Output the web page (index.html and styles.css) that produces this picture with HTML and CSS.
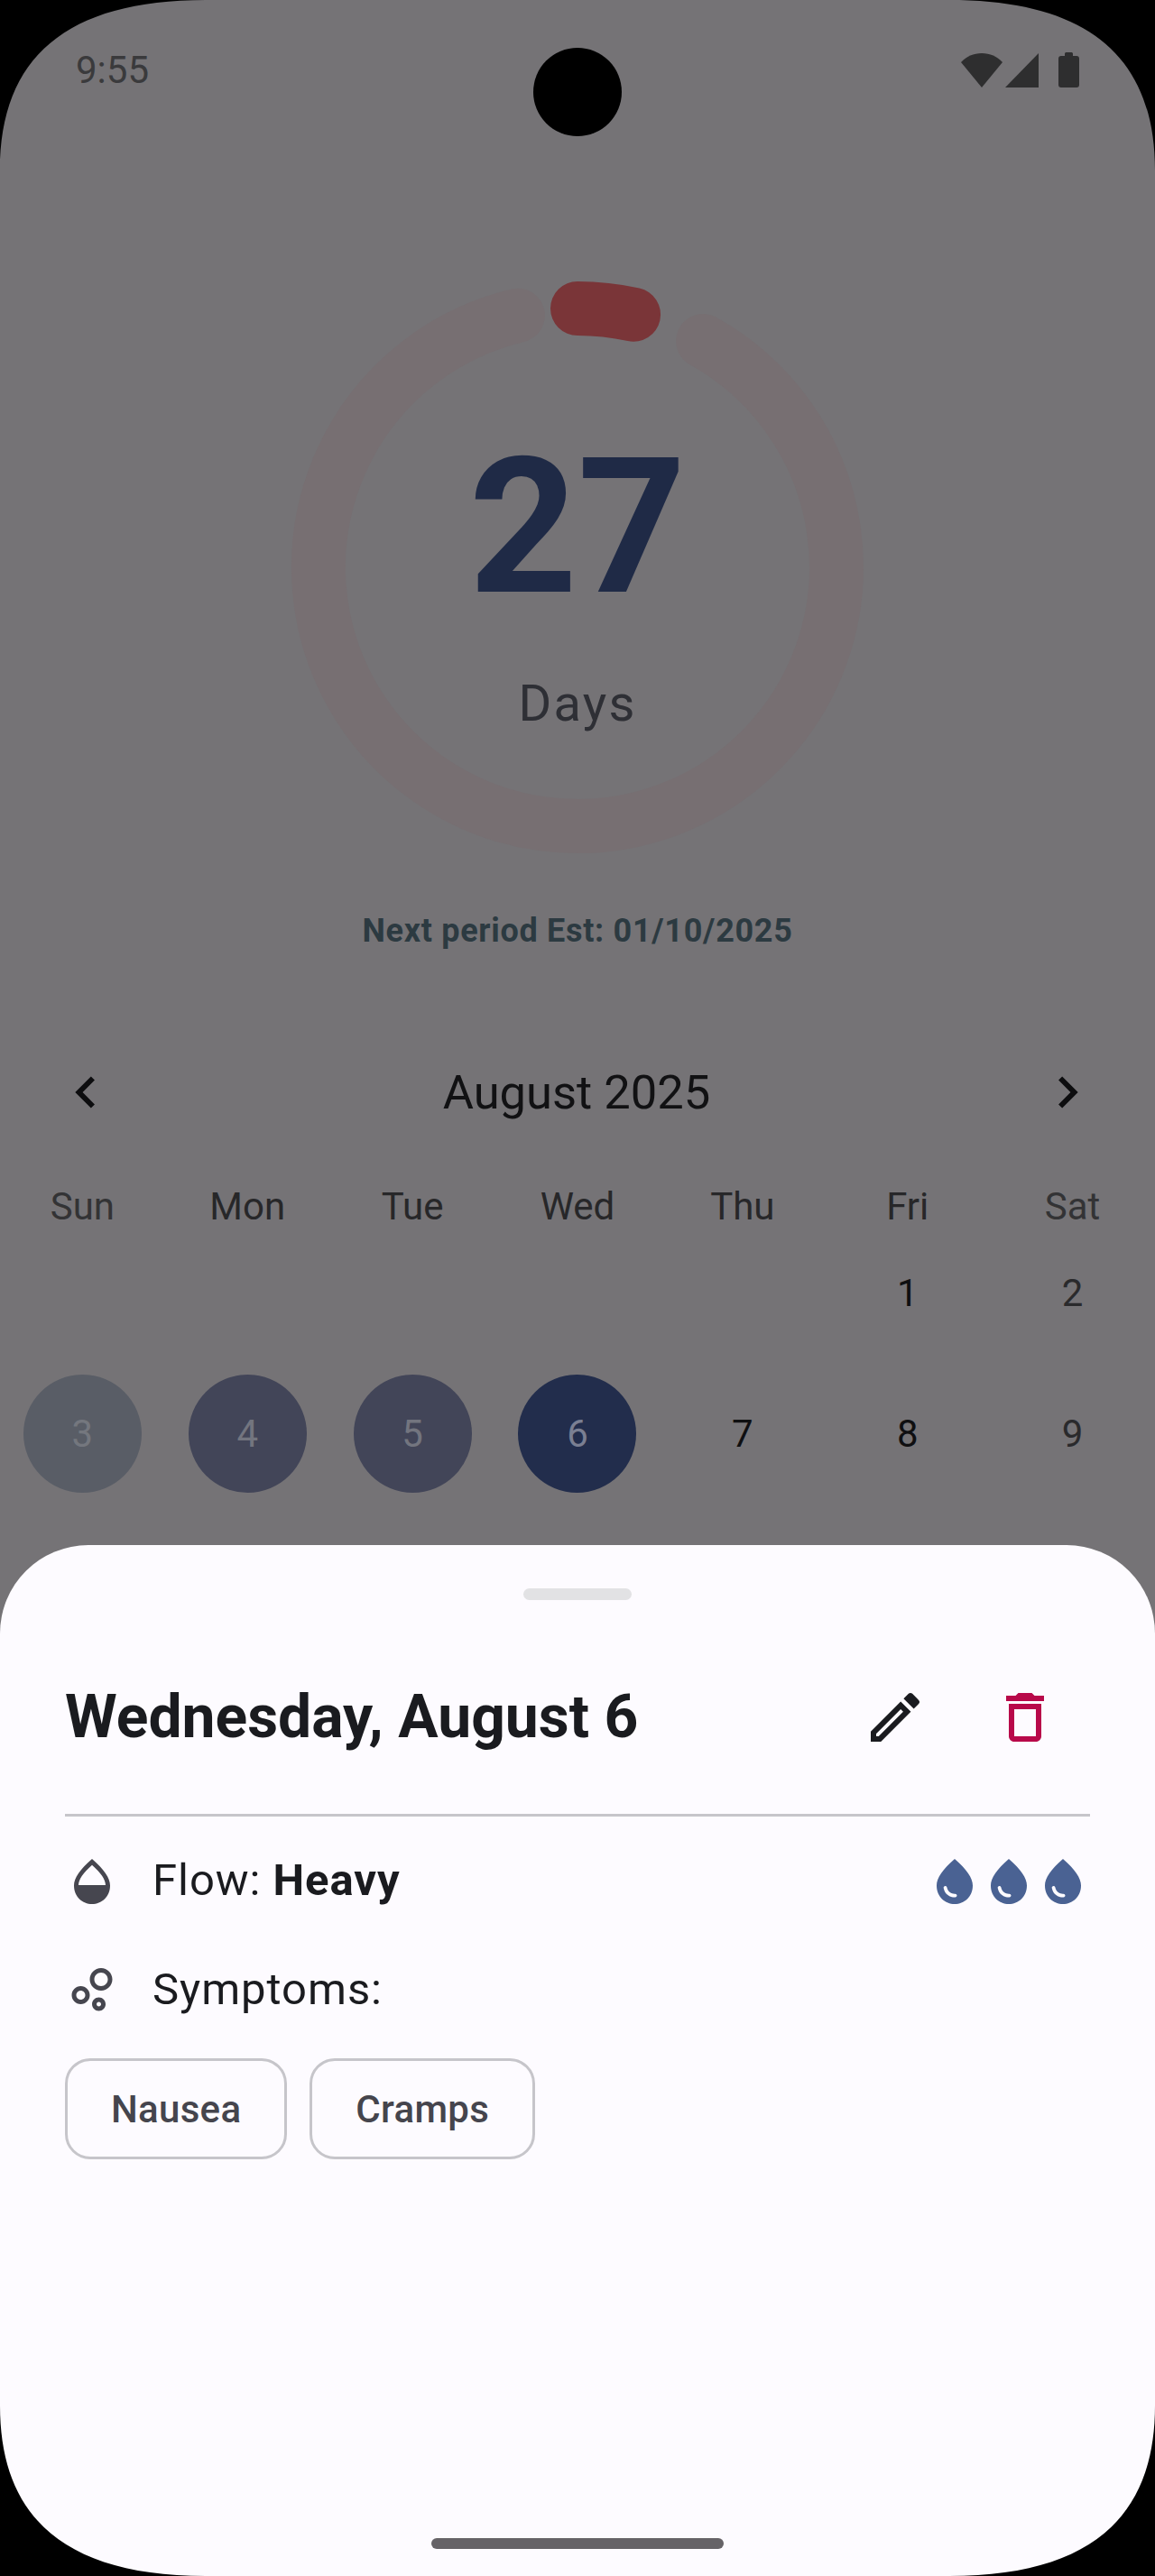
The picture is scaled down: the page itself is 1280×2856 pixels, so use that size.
FILE: index.html
```html
<!DOCTYPE html>
<html lang="en">
<head>
  <meta charset="UTF-8" />
  <title>Cycle Tracker</title>
  <link rel="stylesheet" href="styles.css">
</head>
<body>
<div class="screen">
  <div class="backdrop">
    <div class="status-bar">
      <span class="clock">9:55</span>
      <div class="status-icons">
        <svg width="46" height="38" viewBox="0 0 46 38"><path d="M0 10C6 3.500 14 0 23 0s17 3.500 23 10L23 38z"/></svg>
        <svg width="37" height="38" viewBox="0 0 37 38"><path d="M37 0v38H0z"/></svg>
        <svg width="23" height="39" viewBox="0 0 23 39"><path d="M7 4V1.500A1.500 1.500 0 0 1 8.500 0h6A1.500 1.500 0 0 1 16 1.500V4h4a3 3 0 0 1 3 3v29a3 3 0 0 1-3 3H3a3 3 0 0 1-3-3V7a3 3 0 0 1 3-3z"/></svg>
      </div>
    </div>

    <div class="ring">
      <svg class="ring-svg" width="640" height="640" viewBox="0 0 640 640">
        <path class="ring-track" d="M459.100 69A287 287 0 1 1 253.900 40.700"/>
        <path class="ring-value" d="M320 33A287 287 0 0 1 382.100 39.800"/>
      </svg>
      <div class="ring-label">
        <div class="ring-count">27</div>
        <div class="ring-unit">Days</div>
      </div>
    </div>

    <p class="next-period">Next period Est: 01/10/2025</p>

    <div class="month-bar">
      <svg class="chevron" viewBox="0 0 24 24"><path d="M15.410 7.410 14 6l-6 6 6 6 1.410-1.410L10.830 12z"/></svg>
      <span class="month-name">August 2025</span>
      <svg class="chevron" viewBox="0 0 24 24"><path d="M10 6 8.590 7.410 13.170 12l-4.580 4.590L10 18l6-6z"/></svg>
    </div>

    <div class="weekdays">
      <span class="dim">Sun</span><span>Mon</span><span>Tue</span><span>Wed</span><span>Thu</span><span>Fri</span><span class="dim">Sat</span>
    </div>

    <div class="days">
      <span></span><span></span><span></span><span></span><span></span>
      <span class="day">1</span>
      <span class="day weekend">2</span>
      <span class="day period p1"><b>3</b></span>
      <span class="day period p2"><b>4</b></span>
      <span class="day period p2"><b>5</b></span>
      <span class="day period p3"><b>6</b></span>
      <span class="day">7</span>
      <span class="day">8</span>
      <span class="day weekend">9</span>
    </div>
  </div>

  <div class="sheet">
    <div class="handle"></div>

    <div class="sheet-head">
      <h2 class="sheet-title">Wednesday, August 6</h2>
      <svg class="act edit" viewBox="0 0 24 24"><path d="M14.060 9.020l.92.92L5.920 19H5v-.92l9.060-9.060M17.660 3c-.25 0-.51.1-.7.29l-1.830 1.830 3.750 3.750 1.830-1.830c.39-.39.39-1.020 0-1.410l-2.340-2.340c-.2-.2-.45-.29-.71-.29zm-3.600 3.190L3 17.250V21h3.750L17.810 9.940l-3.750-3.750z"/></svg>
      <svg class="act del" viewBox="0 0 24 24"><path d="M6 19c0 1.100.9 2 2 2h8c1.100 0 2-.9 2-2V7H6v12zM8 9h8v10H8V9zm7.500-5l-1-1h-5l-1 1H5v2h14V4h-3.500z"/></svg>
    </div>

    <div class="info-row flow-row">
      <svg class="info-icon" viewBox="0 0 24 24"><path fill-rule="evenodd" d="M12 2C6.670 6.550 4 10.480 4 13.800 4 18.780 7.800 22 12 22s8-3.220 8-8.200C20 10.480 17.330 6.550 12 2zM12 4.700c3.900 3.400 6 6.500 6 8.900H6c0-2.400 2.100-5.500 6-8.900z"/></svg>
      <span class="info-text">Flow: <b>Heavy</b></span>
      <div class="drops">
        <svg class="drop" viewBox="0 0 24 24"><path d="M12 2c-5.330 4.550-8 8.480-8 11.800 0 4.980 3.800 8.200 8 8.200s8-3.220 8-8.200c0-3.320-2.670-7.250-8-11.800zM7.830 14c.37 0 .67.26.74.62.41 2.220 2.280 2.980 3.640 2.870.43-.02.79.32.79.75 0 .4-.32.73-.72.75-2.130.13-4.620-1.090-5.190-4.120-.08-.45.28-.87.74-.87z"/></svg>
        <svg class="drop" viewBox="0 0 24 24"><path d="M12 2c-5.330 4.550-8 8.480-8 11.800 0 4.980 3.800 8.200 8 8.200s8-3.220 8-8.200c0-3.320-2.670-7.250-8-11.800zM7.830 14c.37 0 .67.26.74.62.41 2.220 2.280 2.980 3.640 2.870.43-.02.79.32.79.75 0 .4-.32.73-.72.75-2.130.13-4.620-1.090-5.190-4.120-.08-.45.28-.87.74-.87z"/></svg>
        <svg class="drop" viewBox="0 0 24 24"><path d="M12 2c-5.330 4.550-8 8.480-8 11.800 0 4.980 3.800 8.200 8 8.200s8-3.220 8-8.200c0-3.320-2.670-7.250-8-11.800zM7.830 14c.37 0 .67.26.74.62.41 2.220 2.280 2.980 3.640 2.870.43-.02.79.32.79.75 0 .4-.32.73-.72.75-2.130.13-4.620-1.090-5.190-4.120-.08-.45.28-.87.74-.87z"/></svg>
      </div>
    </div>

    <div class="info-row symptoms-row">
      <svg class="info-icon" viewBox="0 0 24 24"><path d="M7 10c-2.210 0-4 1.790-4 4s1.790 4 4 4 4-1.790 4-4-1.790-4-4-4zm0 6c-1.100 0-2-.9-2-2s.9-2 2-2 2 .9 2 2-.9 2-2 2zM15.010 15c-1.650 0-3 1.350-3 3s1.350 3 3 3 3-1.350 3-3-1.350-3-3-3zm0 4c-.55 0-1-.45-1-1s.45-1 1-1 1 .45 1 1-.45 1-1 1zM16 2.010c-2.760 0-5 2.240-5 5s2.240 5 5 5 5-2.240 5-5-2.240-5-5-5zm0 8c-1.650 0-3-1.350-3-3s1.350-3 3-3 3 1.350 3 3-1.350 3-3 3z"/></svg>
      <span class="info-text">Symptoms:</span>
    </div>

    <div class="chips">
      <span class="chip">Nausea</span>
      <span class="chip">Cramps</span>
    </div>

    <div class="home-bar"></div>
  </div>

  <div class="camera"></div>
  <svg class="corner tl" viewBox="0 0 228 189"><path d="M0 0H228C73 0 0 64 0 189z"/></svg>
  <svg class="corner tr" viewBox="0 0 228 189"><path d="M0 0H228C73 0 0 64 0 189z"/></svg>
  <svg class="corner bl" viewBox="0 0 228 189"><path d="M0 0H228C73 0 0 64 0 189z"/></svg>
  <svg class="corner br" viewBox="0 0 228 189"><path d="M0 0H228C73 0 0 64 0 189z"/></svg>
</div>
</body>
</html>
```

FILE: styles.css
```css
* {
  box-sizing: border-box;
}
body {
  margin: 0;
  background: #000;
  font-family: Roboto, "Liberation Sans", sans-serif;
}
.screen {
  position: relative;
  width: 1280px;
  height: 2856px;
  overflow: hidden;
  background: #757376;
}

/* dimmed page behind the sheet */
.status-bar {
  height: 154px;
  padding: 0 84px;
  display: flex;
  justify-content: space-between;
  align-items: flex-start;
}
.clock {
  margin-top: 53px;
  font-size: 42px;
  line-height: 50px;
  color: #3a3a3c;
}
.status-icons {
  margin-top: 58px;
  display: flex;
  gap: 3px;
  align-items: center;
}
.status-icons svg {
  fill: #2e2e2f;
}
.status-icons svg:last-child {
  margin-left: 19px;
}
.ring {
  width: 640px;
  height: 640px;
  margin: 155px auto 0;
  display: grid;
  justify-items: center;
}
.ring-svg,
.ring-label {
  grid-area: 1 / 1;
}
.ring-track,
.ring-value {
  fill: none;
  stroke-width: 60;
  stroke-linecap: round;
}
.ring-track {
  stroke: #776f72;
}
.ring-value {
  stroke: #7a3538;
}
.ring-label {
  padding-top: 155px;
  text-align: center;
}
.ring-count {
  font-size: 210px;
  line-height: 240px;
  font-weight: 700;
  color: #1f2a46;
}
.ring-unit {
  margin-top: 43px;
  font-size: 56px;
  line-height: 66px;
  letter-spacing: 2.200px;
  color: #2e2f35;
}
.next-period {
  margin: 58px 0 0;
  text-align: center;
  font-size: 36px;
  line-height: 50px;
  font-weight: 700;
  letter-spacing: 0.700px;
  color: #2c3a41;
}
.month-bar {
  margin-top: 104px;
  height: 100px;
  padding: 0 62px 0 60px;
  display: flex;
  justify-content: space-between;
  align-items: center;
}
.month-name {
  font-size: 52.500px;
  color: #111113;
}
.chevron {
  width: 70px;
  height: 70px;
  fill: #0d0d0f;
}
.weekdays,
.days {
  display: grid;
  grid-template-columns: repeat(7, 1fr);
  text-align: center;
  font-size: 42px;
}
.weekdays {
  margin-top: 52px;
  line-height: 50px;
  color: #272729;
}
.weekdays .dim {
  color: #333335;
}
.days {
  margin-top: -8px;
  grid-auto-rows: 156px;
  color: #0f0f11;
}
.day {
  display: flex;
  align-items: center;
  justify-content: center;
}
.weekend {
  color: #2a2a2c;
}
.period b {
  width: 131px;
  height: 131px;
  border-radius: 50%;
  display: flex;
  align-items: center;
  justify-content: center;
  font-weight: 400;
}
.p1 b {
  background: #595d66;
  color: #74777e;
}
.p2 b {
  background: #424558;
  color: #73757f;
}
.p3 b {
  background: #222d4c;
  color: #7a7f92;
}

/* bottom sheet */
.sheet {
  position: absolute;
  left: 0;
  right: 0;
  bottom: 0;
  height: 1143px;
  padding: 0 72px;
  background: #fdfbff;
  border-radius: 98px 98px 0 0;
  display: flex;
  flex-direction: column;
}
.handle {
  align-self: center;
  width: 120px;
  height: 13px;
  margin-top: 48px;
  border-radius: 7px;
  background: #e2e2e4;
}
.sheet-head {
  height: 240px;
  padding-top: 22px;
  display: flex;
  align-items: center;
  border-bottom: 3px solid #c6c5ca;
}
.sheet-title {
  flex: 1;
  margin: 0;
  font-size: 66px;
  font-weight: 700;
  color: #1a1b1f;
}
.act {
  width: 72px;
  height: 72px;
}
.edit {
  fill: #1a1b1f;
  margin-right: 72px;
}
.del {
  fill: #b8094a;
  margin-right: 36px;
}
.info-row {
  display: flex;
  align-items: center;
  height: 60px;
}
.flow-row {
  margin-top: 42px;
}
.symptoms-row {
  margin-top: 61px;
}
.info-icon {
  width: 60px;
  height: 60px;
  fill: #46464f;
}
.info-text {
  flex: 1;
  margin: 0 0 3px 37px;
  font-size: 49px;
  letter-spacing: 0.950px;
  color: #1a1b1f;
}
.drops {
  display: flex;
}
.drop {
  width: 60px;
  height: 60px;
  fill: #4a6293;
}
.chips {
  margin-top: 45px;
  display: flex;
  gap: 25px;
}
.chip {
  height: 112px;
  padding: 0 48px;
  display: flex;
  align-items: center;
  border: 3px solid #c6c5ca;
  border-radius: 28px;
  font-size: 42px;
  font-weight: 500;
  letter-spacing: 0.300px;
  color: #45454d;
}
.home-bar {
  position: absolute;
  left: 478px;
  bottom: 30px;
  width: 324px;
  height: 12px;
  border-radius: 6px;
  background: #666367;
}

/* phone frame on top of everything */
.camera {
  position: absolute;
  left: 591px;
  top: 53px;
  width: 98px;
  height: 98px;
  border-radius: 50%;
  background: #000;
}
.corner {
  position: absolute;
  width: 228px;
  height: 189px;
  fill: #000;
}
.tl {
  left: 0;
  top: 0;
}
.tr {
  right: 0;
  top: 0;
  transform: scaleX(-1);
}
.bl {
  left: 0;
  bottom: 0;
  transform: scaleY(-1);
}
.br {
  right: 0;
  bottom: 0;
  transform: scale(-1, -1);
}
```
